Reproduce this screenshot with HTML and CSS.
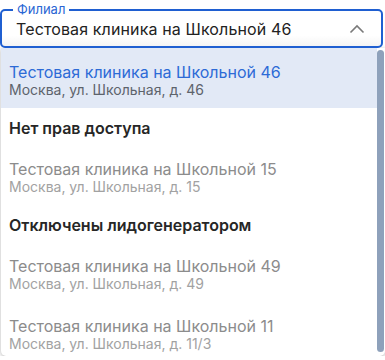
FILE: index.html
```
<!DOCTYPE html>
<html lang="ru">
<head>
    <meta charset="UTF-8">
    <title>Филиал</title>
    <link rel="stylesheet" href="styles.css">
</head>
<body>
    <div class="select">
        <div class="field">
            <span class="field-label">Филиал</span>
            <span class="field-value">Тестовая клиника на Школьной 46</span>
            <svg class="chevron" width="16" height="10" viewBox="0 0 16 10">
                <path d="M1.5 8.5 L8 2 L14.5 8.5" fill="none" stroke="#7a7a7a" stroke-width="1.6"/>
            </svg>
        </div>

        <div class="dropdown">
            <div class="options">
                <div class="option selected">
                    <div class="option-title">Тестовая клиника на Школьной 46</div>
                    <div class="option-sub">Москва, ул. Школьная, д. 46</div>
                </div>

                <div class="group">Нет прав доступа</div>
                <div class="option disabled">
                    <div class="option-title">Тестовая клиника на Школьной 15</div>
                    <div class="option-sub">Москва, ул. Школьная, д. 15</div>
                </div>

                <div class="group">Отключены лидогенератором</div>
                <div class="option disabled">
                    <div class="option-title">Тестовая клиника на Школьной 49</div>
                    <div class="option-sub">Москва, ул. Школьная, д. 49</div>
                </div>
                <div class="option disabled">
                    <div class="option-title">Тестовая клиника на Школьной 11</div>
                    <div class="option-sub">Москва, ул. Школьная, д. 11/3</div>
                </div>
            </div>
            <div class="scrollbar">
                <div class="thumb"></div>
            </div>
        </div>
    </div>
</body>
</html>
```
FILE: styles.css
```
* {
    margin: 0;
    padding: 0;
    box-sizing: border-box;
}

body {
    font-family: Inter, "Noto Sans", sans-serif;
    background-color: #fff;
    color: #222;
}

.select {
    width: 385px;
    padding-top: 9px;
}

.field {
    position: relative;
    display: flex;
    align-items: center;
    justify-content: space-between;
    width: 383px;
    height: 39px;
    padding: 0 16px 0 14px;
    border: 2px solid #1f5fd1;
    border-radius: 5px;
    background: linear-gradient(#fff 70%, #f4f4f4);
}

.field-label {
    position: absolute;
    top: -9px;
    left: 11px;
    padding: 0 4px;
    background-color: #fff;
    font-size: 13px;
    line-height: 14px;
    color: #2a66d4;
}

.field-value {
    font-size: 16px;
    letter-spacing: 0.12px;
    color: #222;
}

.dropdown {
    display: flex;
    height: 308px;
    margin-left: 1px;
    background-color: #fff;
    border-radius: 0 0 5px 5px;
    box-shadow: 0 1px 4px rgba(0, 0, 0, 0.3);
    overflow: hidden;
}

.options {
    flex-grow: 1;
}

.option {
    padding: 14px 8px 10px;
}

.option-title {
    font-size: 16px;
    line-height: 20px;
}

.option-sub {
    font-size: 14px;
    line-height: 16px;
}

.option.selected {
    background-color: #e2e9f6;
}

.option.selected .option-title {
    color: #2d6bd6;
}

.option.selected .option-sub {
    color: #5d636c;
}

.option.disabled .option-title {
    color: #8c8c8c;
}

.option.disabled .option-sub {
    color: #a2a2a2;
}

.group {
    padding: 10px 8px 7px;
    font-size: 16px;
    font-weight: 600;
    line-height: 20px;
    color: #262626;
}

.scrollbar {
    width: 8px;
    padding: 2px 0 4px;
}

.thumb {
    width: 7px;
    height: 100%;
    background-color: #8ea1bb;
    border-radius: 4px;
}
```
